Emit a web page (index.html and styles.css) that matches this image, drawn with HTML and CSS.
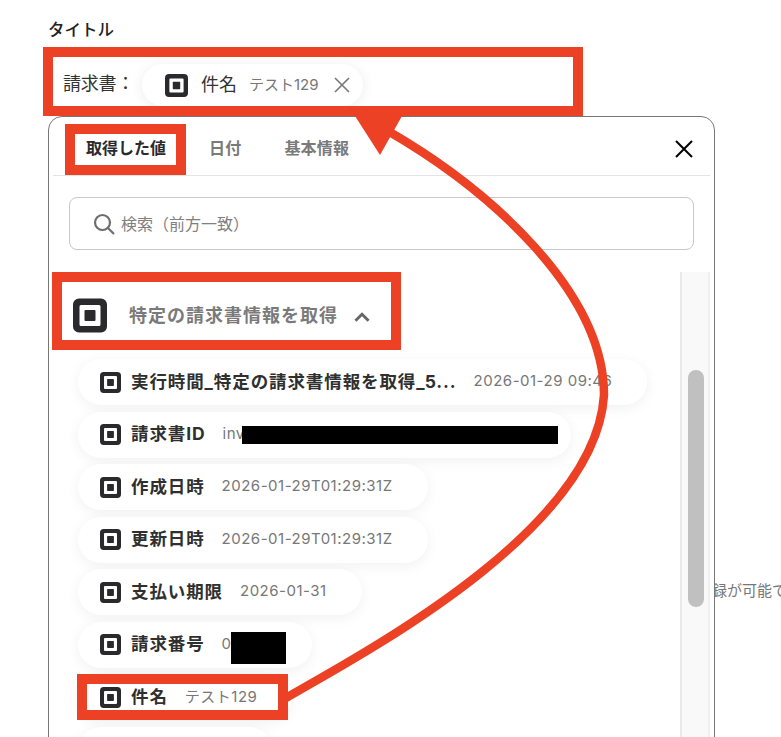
FILE: index.html
```html
<!DOCTYPE html>
<html lang="ja">
<head>
<meta charset="utf-8">
<title>タイトル</title>
<link rel="stylesheet" href="styles.css">
</head>
<body>
<svg class="defs" width="0" height="0" aria-hidden="true">
  <symbol id="sq" viewBox="0 0 34 34">
    <path fill-rule="evenodd" fill="#2a2a2c" d="M6 0H28A6 6 0 0 1 34 6V28A6 6 0 0 1 28 34H6A6 6 0 0 1 0 28V6A6 6 0 0 1 6 0ZM8 6.500A1.500 1.500 0 0 0 6.500 8V26A1.500 1.500 0 0 0 8 27.500H26A1.500 1.500 0 0 0 27.500 26V8A1.500 1.500 0 0 0 26 6.500Z"/>
    <rect x="11.500" y="11.500" width="11" height="11" rx="1" fill="#2a2a2c"/>
  </symbol>
</svg>
<div class="page">
  <div class="title">タイトル</div>
  <div class="field">
    <span class="field-label">請求書：</span>
    <span class="chip">
      <svg class="chip-icon"><use href="#sq"/></svg>
      <span class="chip-name">件名</span>
      <span class="chip-value">テスト129</span>
      <svg class="chip-x" viewBox="0 0 16 16"><path d="M1 1L15 15M15 1L1 15"/></svg>
    </span>
  </div>
  <div class="stage">
    <section class="panel">
      <div class="tabs">
        <span class="tab tab-active">取得した値</span>
        <span class="tab">日付</span>
        <span class="tab">基本情報</span>
        <svg class="close" viewBox="0 0 20 20"><path d="M2 2L18 18M18 2L2 18"/></svg>
      </div>
      <div class="search">
        <svg class="search-icon" viewBox="0 0 22 22"><circle cx="9.500" cy="9.500" r="7.500"/><path d="M15 15L21 21"/></svg>
        <span class="search-text">検索（前方一致）</span>
      </div>
      <div class="body">
        <div class="list">
          <div class="group">
            <svg class="group-icon"><use href="#sq"/></svg>
            <span class="group-name">特定の請求書情報を取得</span>
            <svg class="chevron" viewBox="0 0 16 11"><path d="M2 9L8 3L14 9"/></svg>
          </div>
          <div class="pills">
            <div class="pill"><svg class="pill-icon"><use href="#sq"/></svg><b class="pill-name">実行時間_特定の請求書情報を取得_5...</b><span class="pill-value">2026-01-29 09:46</span></div>
            <div class="pill pill-id"><svg class="pill-icon"><use href="#sq"/></svg><b class="pill-name">請求書ID</b><span class="pill-value">inv</span><i class="redact redact-id"></i></div>
            <div class="pill"><svg class="pill-icon"><use href="#sq"/></svg><b class="pill-name">作成日時</b><span class="pill-value">2026-01-29T01:29:31Z</span></div>
            <div class="pill"><svg class="pill-icon"><use href="#sq"/></svg><b class="pill-name">更新日時</b><span class="pill-value">2026-01-29T01:29:31Z</span></div>
            <div class="pill"><svg class="pill-icon"><use href="#sq"/></svg><b class="pill-name">支払い期限</b><span class="pill-value">2026-01-31</span></div>
            <div class="pill pill-no"><svg class="pill-icon"><use href="#sq"/></svg><b class="pill-name">請求番号</b><span class="pill-value">0</span><i class="redact redact-no"></i></div>
            <div class="pill"><svg class="pill-icon"><use href="#sq"/></svg><b class="pill-name">件名</b><span class="pill-value">テスト129</span></div>
            <div class="pill pill-last"></div>
          </div>
        </div>
        <div class="track"><div class="thumb"></div></div>
      </div>
    </section>
    <div class="hint">録が可能で</div>
  </div>

  <div class="mark mark-field"></div>
  <div class="mark mark-tab"></div>
  <div class="mark mark-group"></div>
  <div class="mark mark-pill"></div>
  <svg class="arrow" viewBox="0 0 781 737">
    <path class="arrow-line" d="M284 699C385 642 596 525 604 395C604 292 490 190 388 131"/>
    <path class="arrow-head" d="M355 116L380 155L402 116Z"/>
  </svg>
</div>
</body>
</html>
```
FILE: styles.css
```css
* { box-sizing: border-box; }
html, body { margin: 0; padding: 0; background: #fff; }
body { font-family: "Inter", "Noto Sans CJK JP", sans-serif; color: #2a2a2c; }
.defs { position: absolute; }
.page { position: relative; width: 781px; height: 737px; overflow: hidden; padding: 20px 0 0 48px; }

.title { font-size: 16.5px; line-height: 20px; font-weight: 500; height: 20px; color: #222; }

.field { display: flex; align-items: flex-start; gap: 14px; height: 56px; margin-top: 20px; padding: 4px 0 0 15px; }
.field-label { font-size: 18px; line-height: 40px; color: #333; white-space: nowrap; width: 65px; letter-spacing: -.2px; }
.chip { display: flex; align-items: center; height: 42px; width: 221px; padding-left: 23px; border-radius: 21px; background: #fff; box-shadow: 0 2px 14px rgba(0,0,0,.08); flex: none; }
.chip-icon { width: 23px; height: 23px; flex: none; }
.chip-name { margin: 0 0 5px 13px; font-size: 18px; color: #333; width: 37px; white-space: nowrap; }
.chip-value { margin: 0 0 3px 11px; font-size: 15px; color: #777; width: 70px; white-space: nowrap; }
.chip-x { margin-left: 15px; width: 16px; height: 16px; fill: none; stroke: #777; stroke-width: 1.6; }

.stage { display: flex; align-items: flex-start; }
.panel { position: relative; z-index: 1; flex: none; width: 667px; height: 700px; background: #fff; border: 1px solid #777; border-radius: 14px; }

.tabs { display: flex; align-items: center; height: 59px; margin: 0 4px; padding: 2px 0 0 33px; border-bottom: 1px solid #e4e4e4; }
.tab { font-size: 16px; font-weight: 700; letter-spacing: .2px; color: #7a7a7a; white-space: nowrap; margin-right: 43px; }
.tab-active { color: #2a2a2c; letter-spacing: 0; }
.close { margin: 4px 16px 0 auto; width: 20px; height: 20px; fill: none; stroke: #000; stroke-width: 2; }

.search { display: flex; align-items: center; gap: 6px; height: 53px; margin: 21px 20px 0; padding: 0 0 0 23px; border: 1px solid #c8c8c8; border-radius: 8px; color: #808080; }
.search-text { font-size: 16px; margin-bottom: 2px; }
.search-icon { width: 22px; height: 22px; fill: none; stroke: #6e6e6e; stroke-width: 2.2; flex: none; }

.body { display: flex; justify-content: space-between; margin: 22px 4px 0 0; height: 500px; }
.list { flex: 1; min-width: 0; }
.group { display: flex; align-items: center; height: 87px; padding: 0 0 8px 24px; }
.group-icon { width: 34px; height: 35px; flex: none; margin-top: 7px; }
.group-name { margin: 4px 0 0 22px; font-size: 18px; font-weight: 700; letter-spacing: 1px; color: #7a7a7a; white-space: nowrap; }
.chevron { margin: 11px 0 0 15px; width: 18px; height: 12px; fill: none; stroke: #666; stroke-width: 2.6; }

.pills { display: flex; flex-direction: column; align-items: flex-start; gap: 6.5px; padding-left: 29px; }
.pill { position: relative; display: flex; align-items: center; height: 46px; padding: 0 35px 0 22px; border-radius: 23px; background: #fff; box-shadow: 0 3px 14px rgba(0,0,0,.06); white-space: nowrap; }
.pill-icon { width: 21px; height: 21px; flex: none; }
.pill-name { margin: 0 0 4px 10px; font-size: 17.500px; font-weight: 700; letter-spacing: .9px; color: #2f2f2f; }
.pill-value { margin: 0 0 3px 17px; font-size: 15px; letter-spacing: .5px; color: #777; }
.pill-id { width: 493px; }
.pill-no { width: 234px; }
.pill-last { width: 194px; }
.redact { display: block; position: absolute; background: #000; }
.redact-id { left: 164px; top: 14px; width: 316px; height: 18px; }
.redact-no { left: 153px; top: 10px; width: 55px; height: 32px; }

.track { flex: none; width: 30px; height: 100%; background: #f9f9f9; border-left: 2px solid #e9e9e9; border-right: 2px solid #f0f0f0; padding: 98px 0 0 6px; }
.thumb { width: 16px; height: 237px; border-radius: 8px; background: #c0c0c0; }

.hint { flex: none; margin: 465px 0 0 -3px; font-size: 15px; line-height: 20px; color: #777; white-space: nowrap; }

.mark { position: absolute; z-index: 3; border: 10px solid #ec4124; }
.mark-field { left: 43px; top: 47px; width: 540px; height: 69px; }
.mark-tab { left: 65px; top: 124px; width: 121px; height: 51px; }
.mark-group { left: 52px; top: 272px; width: 349px; height: 78px; }
.mark-pill { left: 77px; top: 674px; width: 211px; height: 46px; }

.arrow { position: absolute; z-index: 4; left: 0; top: 0; width: 781px; height: 737px; pointer-events: none; }
.arrow-line { fill: none; stroke: #ec4124; stroke-width: 8.500; }
.arrow-head { fill: #ec4124; }
```
